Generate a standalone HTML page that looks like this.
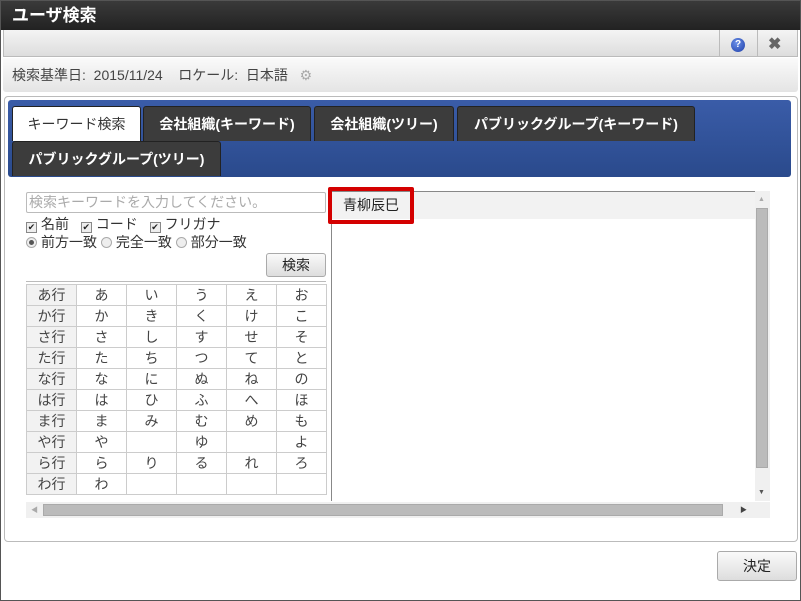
<!DOCTYPE html><html><head><meta charset="utf-8"><style>
*{box-sizing:border-box;margin:0;padding:0}
body{width:801px;height:601px;position:relative;overflow:hidden;background:#fff;font-family:"Liberation Sans","Noto Sans CJK JP",sans-serif;font-size:14px;color:#333}
.a{position:absolute}
.tab{position:absolute;height:35px;background:#3c3c3c;border:1px solid #222;border-bottom:none;border-radius:3px 3px 0 0;color:#fff;font-weight:bold;font-size:14px;line-height:34px;text-align:center}
table{border-collapse:collapse;position:absolute;left:26px;top:284px}
td{border:1px solid #ccc;width:50px;height:21px;text-align:center;font-size:14px;color:#444;padding:0;line-height:19px}
td.h{background:#f2f2f2}
.cb{display:inline-block;width:11px;height:11px;border:1px solid #888;background:#eee;vertical-align:-1px;margin-right:4px;font-size:9px;line-height:9px;text-align:center;color:#222}
.rd{display:inline-block;width:11px;height:11px;border:1px solid #aaa;border-radius:50%;background:#eee;vertical-align:-1px;margin-right:4px;position:relative}
.btn{position:absolute;border:1px solid #aaa;border-radius:3px;background:linear-gradient(#fafafa,#ddd);text-align:center;color:#222}
</style></head><body>
<div class="a" style="left:0;top:0;width:801px;height:601px;border:1px solid #555"></div>
<div class="a" style="left:1px;top:1px;width:799px;height:29px;background:linear-gradient(#3a3a3a,#222);color:#fff;font-weight:bold;font-size:17px;line-height:29px;padding-left:11px">ユーザ検索</div>
<div class="a" style="left:3px;top:30px;width:795px;height:27px;background:linear-gradient(#f4f4f4,#ddd);border:1px solid #bbb;border-top:none"></div>
<div class="a" style="left:719px;top:30px;width:1px;height:27px;background:#bbb"></div>
<div class="a" style="left:757px;top:30px;width:1px;height:27px;background:#bbb"></div>
<div class="a" style="left:731px;top:38px;width:14px;height:14px;border-radius:50%;background:radial-gradient(circle at 40% 35%,#6a8fe8,#1f3fa8);color:#fff;font-size:10px;font-weight:bold;line-height:14px;text-align:center">?</div>
<div class="a" style="left:768px;top:34px;font-size:16px;font-weight:bold;color:#666">✖</div>
<div class="a" style="left:3px;top:58px;width:795px;height:34px;background:linear-gradient(#fafafa,#e4e4e4);border-radius:0 0 3px 3px;line-height:34px;padding-left:9px;color:#444">検索基準日:&nbsp; 2015/11/24 &nbsp;&nbsp; ロケール:&nbsp; 日本語 &nbsp;&nbsp;<span style="color:#aaa">⚙</span></div>
<div class="a" style="left:4px;top:96px;width:794px;height:446px;border:1px solid #bbb;border-radius:4px"></div>
<div class="a" style="left:8px;top:100px;width:783px;height:77px;background:linear-gradient(#3a5ca8,#2a4a8c);border-radius:3px"></div>
<div class="tab" style="left:12px;top:106px;width:129px;background:#fff;color:#333;font-weight:normal">キーワード検索</div>
<div class="tab" style="left:143px;top:106px;width:168px">会社組織(キーワード)</div>
<div class="tab" style="left:314px;top:106px;width:140px">会社組織(ツリー)</div>
<div class="tab" style="left:457px;top:106px;width:238px">パブリックグループ(キーワード)</div>
<div class="tab" style="left:12px;top:141px;width:209px">パブリックグループ(ツリー)</div>
<div class="a" style="left:26px;top:192px;width:300px;height:21px;border:1px solid #bbb;border-radius:2px;color:#aaa;padding-left:2px;line-height:19px;font-size:14px">検索キーワードを入力してください。</div>
<div class="a" style="left:26px;top:215px;line-height:18px;word-spacing:2px"><span class="cb">✔</span>名前&nbsp; <span class="cb">✔</span>コード&nbsp; <span class="cb">✔</span>フリガナ</div>
<div class="a" style="left:26px;top:233px;line-height:18px"><span class="rd"><span class="a" style="left:2px;top:2px;width:5px;height:5px;border-radius:50%;background:#555"></span></span>前方一致 <span class="rd"></span>完全一致 <span class="rd"></span>部分一致</div>
<div class="btn" style="left:266px;top:253px;width:60px;height:24px;line-height:22px">検索</div>
<div class="a" style="left:26px;top:281px;width:300px;height:1px;background:#bbb"></div>
<table>
<tr><td class="h">あ行</td><td>あ</td><td>い</td><td>う</td><td>え</td><td>お</td></tr>
<tr><td class="h">か行</td><td>か</td><td>き</td><td>く</td><td>け</td><td>こ</td></tr>
<tr><td class="h">さ行</td><td>さ</td><td>し</td><td>す</td><td>せ</td><td>そ</td></tr>
<tr><td class="h">た行</td><td>た</td><td>ち</td><td>つ</td><td>て</td><td>と</td></tr>
<tr><td class="h">な行</td><td>な</td><td>に</td><td>ぬ</td><td>ね</td><td>の</td></tr>
<tr><td class="h">は行</td><td>は</td><td>ひ</td><td>ふ</td><td>へ</td><td>ほ</td></tr>
<tr><td class="h">ま行</td><td>ま</td><td>み</td><td>む</td><td>め</td><td>も</td></tr>
<tr><td class="h">や行</td><td>や</td><td></td><td>ゆ</td><td></td><td>よ</td></tr>
<tr><td class="h">ら行</td><td>ら</td><td>り</td><td>る</td><td>れ</td><td>ろ</td></tr>
<tr><td class="h">わ行</td><td>わ</td><td></td><td></td><td></td><td></td></tr>
</table>
<div class="a" style="left:331px;top:191px;width:1px;height:310px;background:#888"></div>
<div class="a" style="left:331px;top:191px;width:424px;height:1px;background:#888"></div>
<div class="a" style="left:332px;top:192px;width:423px;height:27px;background:#f2f2f2"></div>
<div class="a" style="left:343px;top:192px;line-height:27px;color:#222;font-size:14px">青柳辰巳</div>
<div class="a" style="left:328px;top:187px;width:86px;height:37px;border:4px solid #d40000;border-radius:2px"></div>
<div class="a" style="left:755px;top:191px;width:15px;height:310px;background:#f0f0f0"></div>
<div class="a" style="left:756px;top:208px;width:12px;height:260px;background:#bbb;border:1px solid #aaa"></div>
<div class="a" style="left:758px;top:196px;font-size:7px;color:#aaa">▲</div>
<div class="a" style="left:758px;top:489px;font-size:7px;color:#555">▼</div>
<div class="a" style="left:26px;top:502px;width:744px;height:16px;background:#f0f0f0"></div>
<div class="a" style="left:43px;top:504px;width:680px;height:12px;background:#bbb;border:1px solid #aaa"></div>
<div class="a" style="left:31px;top:505px;font-size:7px;color:#aaa">◀</div>
<div class="a" style="left:740px;top:505px;font-size:7px;color:#444">▶</div>
<div class="btn" style="left:717px;top:551px;width:80px;height:30px;line-height:28px">決定</div>
</body></html>
